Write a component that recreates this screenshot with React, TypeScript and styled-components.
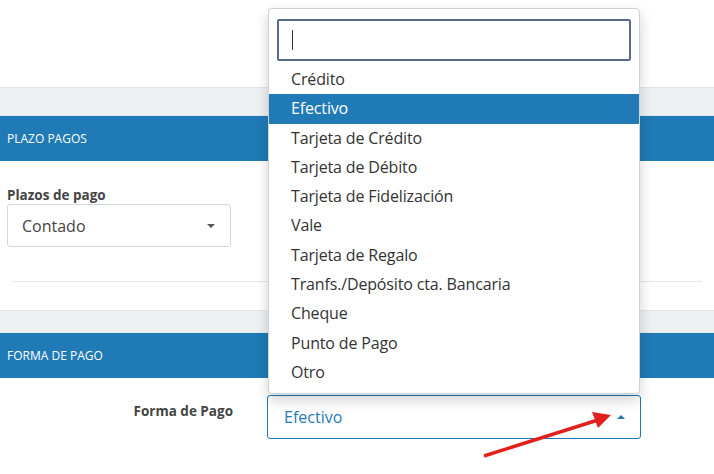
import styled, { createGlobalStyle } from 'styled-components';

const GlobalStyle = createGlobalStyle`
	html, body {
		margin: 0;
		padding: 0;
		background: #ffffff;
		font-family: "Open Sans", "Liberation Sans", sans-serif;
		color: #333333;
	}
`;

const Page = styled.div`
	position: relative;
	width: 714px;
	height: 474px;
	overflow: hidden;
	background: #ffffff;
`;

const PanelEnd = styled.div`
	height: 87px;
	border-bottom: 1px solid #e3e6e8;
`;

const Gap = styled.div<{ $h: number }>`
	height: ${(p) => p.$h}px;
	background: #eef1f2;
	border-bottom: 1px solid #e6e9eb;
	box-sizing: border-box;
`;

const SectionHeader = styled.div`
	height: 45px;
	background: #1f7ab5;
	color: #ffffff;
	font-size: 12px;
	display: flex;
	align-items: center;
	padding-left: 7px;
`;

const PlazoBody = styled.div`
	height: 150px;
	padding: 25px 0 0 7px;
	box-sizing: border-box;
	border-bottom: 1px solid #e3e6e8;
`;

const FieldLabel = styled.div`
	font-size: 13.5px;
	font-weight: 700;
	color: #444444;
	line-height: 18px;
`;

const Select = styled.div<{ $active?: boolean; $w: number }>`
	width: ${(p) => p.$w}px;
	height: ${(p) => (p.$active ? 44 : 43)}px;
	box-sizing: border-box;
	border: 1px solid ${(p) => (p.$active ? '#1f7ab5' : '#d3d6d9')};
	border-radius: 3px;
	display: flex;
	align-items: center;
	justify-content: space-between;
	padding: 0 15px 0 ${(p) => (p.$active ? 16 : 14)}px;
	font-size: 16px;
	color: ${(p) => (p.$active ? '#1f7ab5' : '#444444')};
	background: #ffffff;
`;

const Caret = styled.span<{ $up?: boolean }>`
	width: 0;
	height: 0;
	border-left: 4px solid transparent;
	border-right: 4px solid transparent;
	${(p) =>
		p.$up
			? 'border-bottom: 4px solid #1f7ab5;'
			: 'border-top: 4px solid #555555;'}
`;

const Divider = styled.div`
	margin: 34px 12px 0 5px;
	height: 1px;
	background: #e6e8ea;
`;

const FormaRow = styled.div`
	display: flex;
	align-items: flex-start;
	padding-top: 17px;
`;

const RightLabel = styled(FieldLabel)`
	width: 233px;
	text-align: right;
	padding-top: 7px;
	margin-right: 34px;
`;

const Dropdown = styled.div`
	position: absolute;
	left: 268px;
	top: 8px;
	width: 372px;
	height: 386px;
	box-sizing: border-box;
	background: #ffffff;
	border: 1px solid #cfd2d5;
	border-radius: 4px;
	box-shadow: 0 6px 14px rgba(0, 0, 0, 0.18);
	padding: 10px 8px 0 8px;
`;

const Search = styled.div`
	height: 42px;
	box-sizing: border-box;
	border: 2px solid #56698a;
	border-radius: 2px;
	display: flex;
	align-items: center;
	padding-left: 13px;
	margin-bottom: 4px;
`;

const Cursor = styled.span`
	width: 1px;
	height: 20px;
	background: #333333;
`;

const OptionList = styled.ul`
	list-style: none;
	margin: 0 -8px;
	padding: 0;
`;

const Option = styled.li<{ $selected?: boolean }>`
	height: 29.3px;
	line-height: 29.3px;
	padding-left: 22px;
	font-size: 16px;
	letter-spacing: -0.15px;
	background: ${(p) => (p.$selected ? '#1f7ab5' : 'transparent')};
	color: ${(p) => (p.$selected ? '#ffffff' : '#333333')};
`;

const ArrowLayer = styled.svg`
	position: absolute;
	left: 0;
	top: 0;
	pointer-events: none;
`;

const options = [
	'Crédito',
	'Efectivo',
	'Tarjeta de Crédito',
	'Tarjeta de Débito',
	'Tarjeta de Fidelización',
	'Vale',
	'Tarjeta de Regalo',
	'Tranfs./Depósito cta. Bancaria',
	'Cheque',
	'Punto de Pago',
	'Otro',
];

export default function App() {
	return (
		<Page>
			<GlobalStyle />
			<PanelEnd />
			<Gap $h={28} />
			<SectionHeader>PLAZO PAGOS</SectionHeader>
			<PlazoBody>
				<FieldLabel>Plazos de pago</FieldLabel>
				<Select $w={224}>
					<span>Contado</span>
					<Caret />
				</Select>
				<Divider />
			</PlazoBody>
			<Gap $h={22} />
			<SectionHeader>FORMA DE PAGO</SectionHeader>
			<FormaRow>
				<RightLabel>Forma de Pago</RightLabel>
				<Select $active $w={374}>
					<span>Efectivo</span>
					<Caret $up />
				</Select>
			</FormaRow>

			<Dropdown>
				<Search>
					<Cursor />
				</Search>
				<OptionList>
					{options.map((o) => (
						<Option key={o} $selected={o === 'Efectivo'}>
							{o}
						</Option>
					))}
				</OptionList>
			</Dropdown>

			<ArrowLayer width="714" height="474" viewBox="0 0 714 474">
				<line x1="484" y1="456" x2="598" y2="420" stroke="#e3201c" strokeWidth="3.5" />
				<polygon points="611,415 592,412 598,428" fill="#e3201c" />
			</ArrowLayer>
		</Page>
	);
}
